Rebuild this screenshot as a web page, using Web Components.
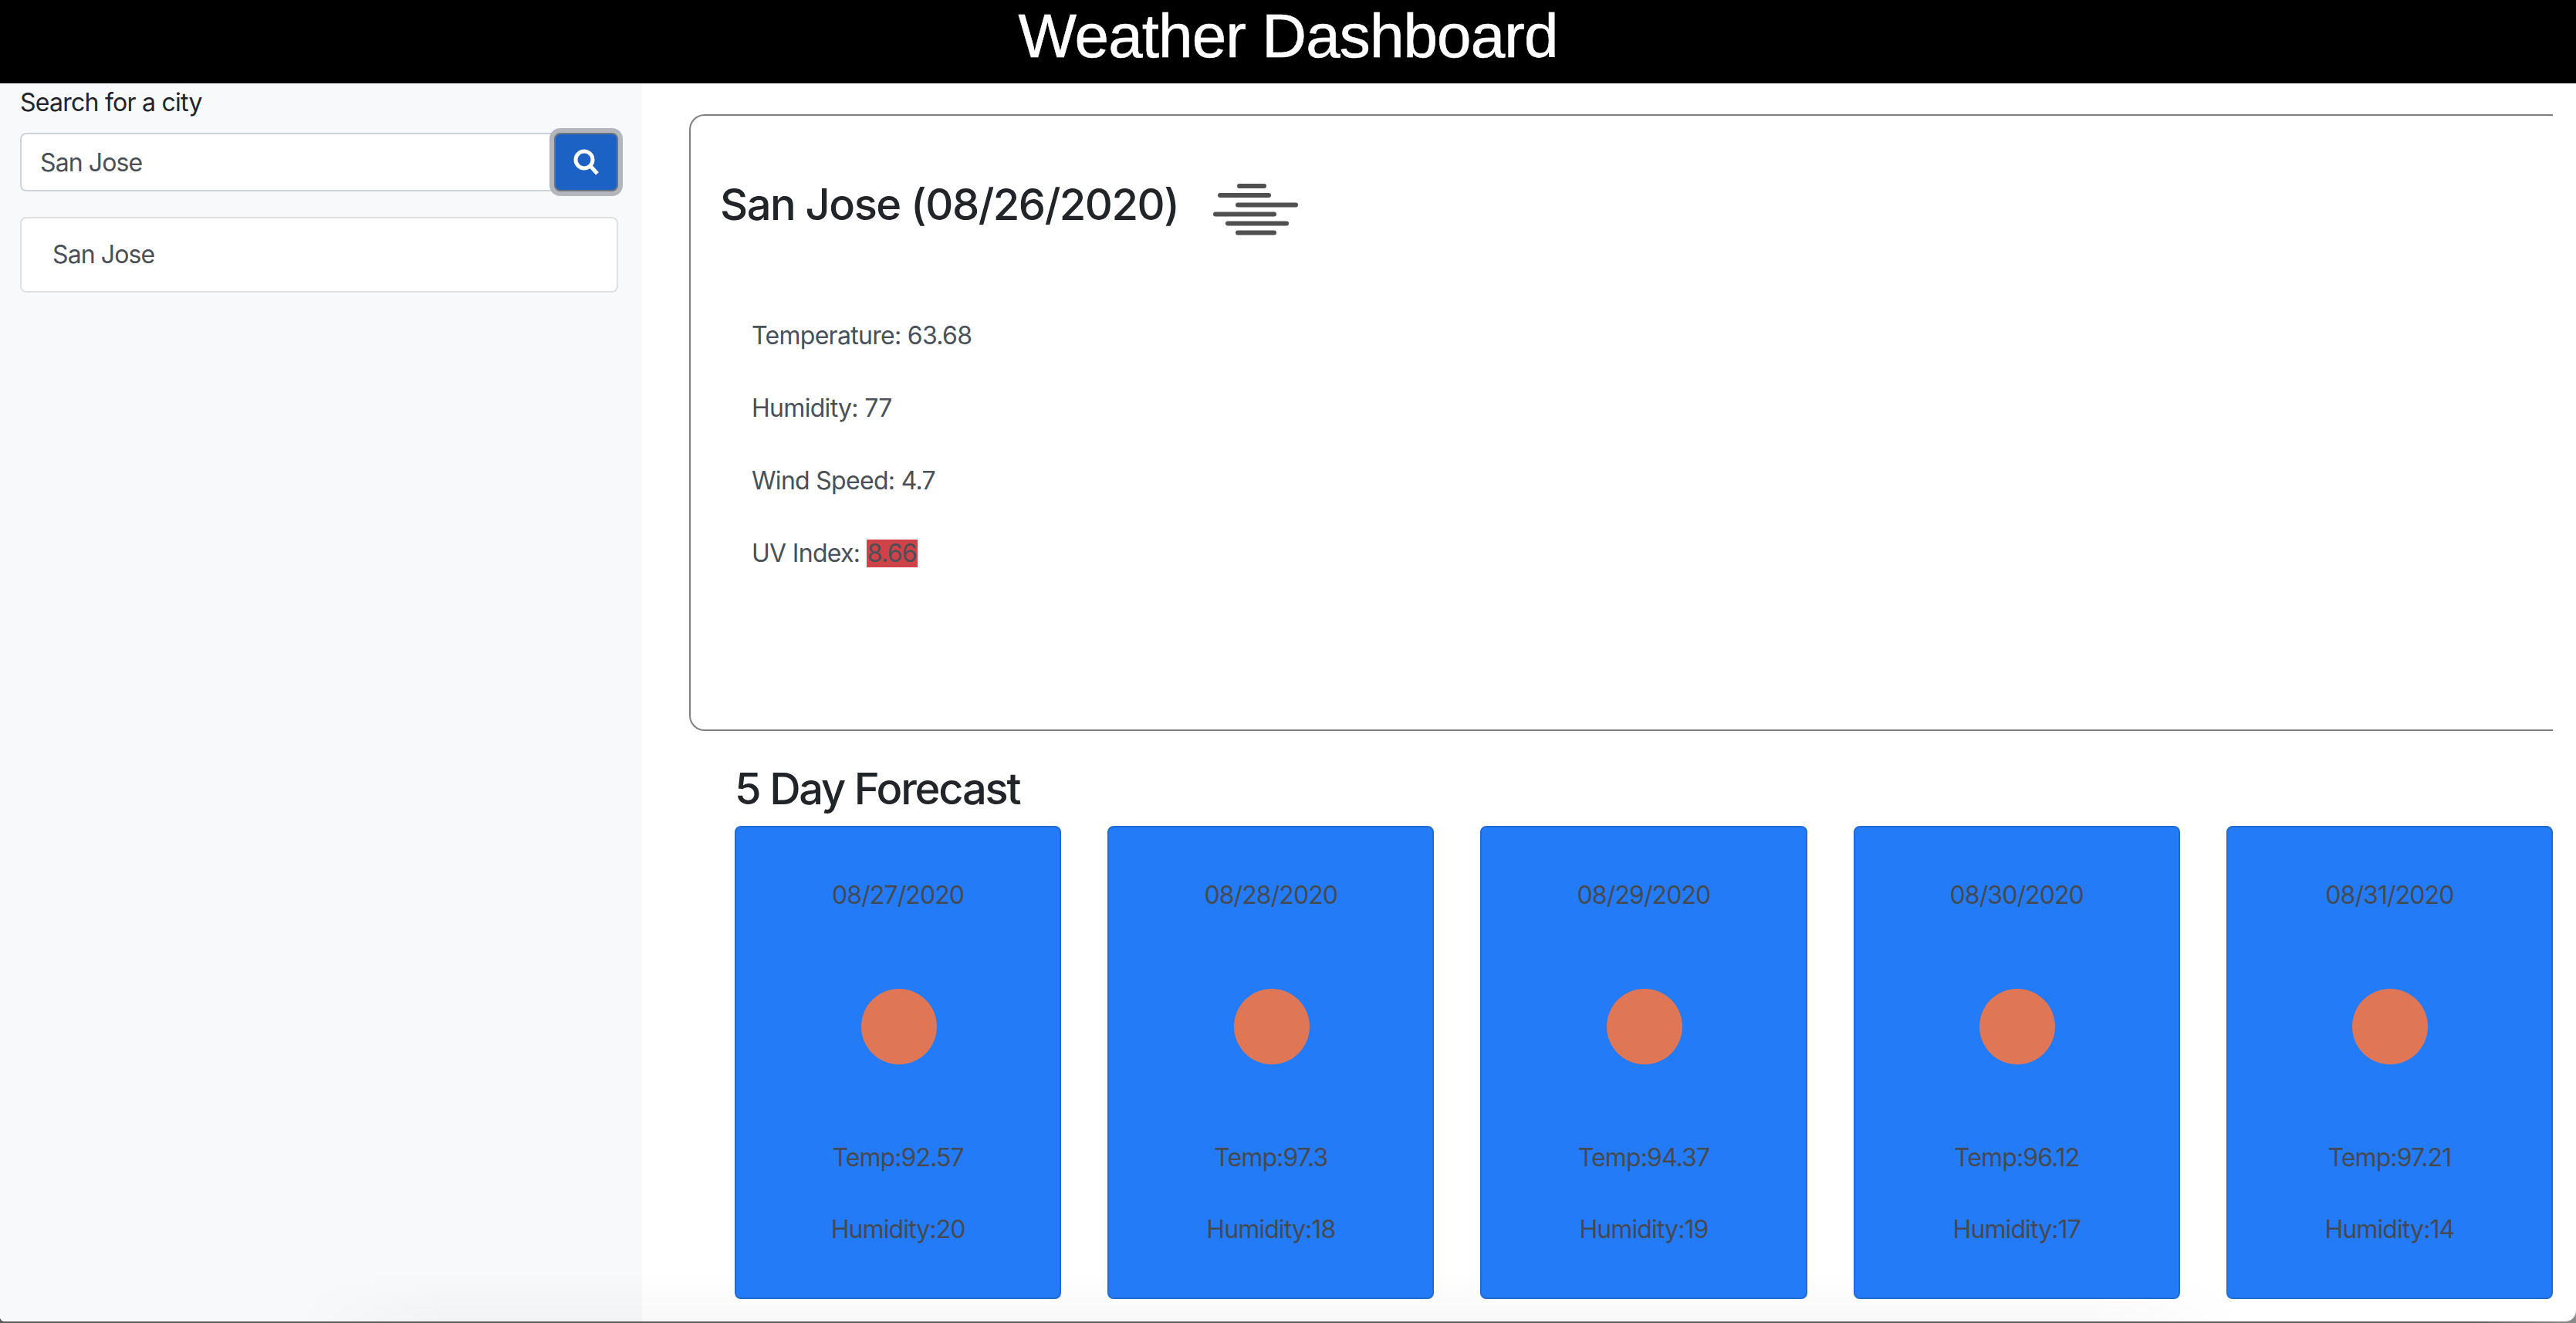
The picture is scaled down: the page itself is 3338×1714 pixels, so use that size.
<!DOCTYPE html>
<html lang="en">
<head>
<meta charset="utf-8">
<title>Weather Dashboard</title>
<style>
  html { height: 1714px; overflow: hidden; background: linear-gradient(to right, #5c5c5c 96%, #8c8c8c); }
  body { margin: 0; height: 1714px; overflow: hidden; position: relative; font-family: Inter, "Liberation Sans", sans-serif; }
</style>
</head>
<body>
<weather-app>
  <app-header>Weather Dashboard</app-header>
  <search-sidebar slot="side">
    <history-item>San Jose</history-item>
  </search-sidebar>
  <current-weather slot="main" city="San Jose (08/26/2020)" temp="63.68" humidity="77" wind="4.7" uv="8.66"></current-weather>
  <forecast-list slot="main">
    <forecast-card date="08/27/2020" temp="92.57" humidity="20"></forecast-card>
    <forecast-card date="08/28/2020" temp="97.3" humidity="18"></forecast-card>
    <forecast-card date="08/29/2020" temp="94.37" humidity="19"></forecast-card>
    <forecast-card date="08/30/2020" temp="96.12" humidity="17"></forecast-card>
    <forecast-card date="08/31/2020" temp="97.21" humidity="14"></forecast-card>
  </forecast-list>
</weather-app>

<script>
// small helper so every element gets an open shadow root from a template string
function define(name, html, extra) {
  const template = document.createElement("template");
  template.innerHTML = html.trim();
  class El extends HTMLElement {
    constructor() {
      super();
      this.attachShadow({mode: "open"}).appendChild(template.content.cloneNode(true));
    }
    connectedCallback() {
      if (extra) extra(this.shadowRoot, this);
    }
  }
  customElements.define(name, El);
}

define("weather-app", `
<style>
  :host { display: flex; flex-direction: column; height: 1712px; background: #fff; overflow: hidden; border-radius: 0 0 14px 6px; position: relative; }
  .row { flex: 1; display: grid; grid-template-columns: 832px 1fr; min-height: 0; }
  .main { padding: 40px 30px 0 61px; min-width: 0; }
  .shade { position: absolute; left: 383px; width: 2522px; top: 1650px; height: 62px; pointer-events: none;
    background: linear-gradient(to bottom, rgba(0,0,0,0), rgba(0,0,0,.028));
    -webkit-mask-image: linear-gradient(to right, transparent, #000 8%, #000 92%, transparent); }
</style>
<slot></slot>
<div class="row">
  <slot name="side"></slot>
  <div class="main"><slot name="main"></slot></div>
</div>
<div class="shade"></div>
`);

define("app-header", `
<style>
  :host { display: block; height: 108px; background: #000; color: #fff; text-align: center;
    font: 400 80px/93px "Liberation Sans", Arial, sans-serif; letter-spacing: -0.9px; -webkit-text-stroke: 0.6px #fff; }
</style>
<slot></slot>
`);

define("search-sidebar", `
<style>
  :host { display: block; background: #f8f9fa; padding: 1px 31px 0 26px; font: 400 32px/48px Inter, sans-serif; color: #212529; }
  .label { letter-spacing: -0.75px; }
  .group { display: flex; margin-top: 15px; height: 76px; }
  .input { flex: 1; box-sizing: border-box; border: 2px solid #ced4da; border-right: 0; border-radius: 8px 0 0 8px; background: #fff;
    padding: 0 24px; line-height: 74px; color: #495057; letter-spacing: -0.9px; }
  button { width: 83px; box-sizing: border-box; padding: 0; border: 2px solid #6c757d; border-radius: 8px; background: #1b62c4;
    box-shadow: 0 0 0 6px #b3b6ba; position: relative; display: flex; align-items: center; justify-content: center; }
  .list { margin-top: 33px; }
</style>
<div class="label">Search for a city</div>
<div class="group">
  <div class="input">San Jose</div>
  <button aria-label="Search">
    <svg width="36" height="36" viewBox="0 0 36 36" fill="none" stroke="#fff" stroke-width="5">
      <circle cx="15" cy="15" r="11"/>
      <path d="M23 23 L32 33"/>
    </svg>
  </button>
</div>
<div class="list"><slot></slot></div>
`);

define("history-item", `
<style>
  :host { display: block; box-sizing: border-box; height: 98px; background: #fff; border: 2px solid #dfe0e1; border-radius: 8px;
    padding: 0 40px; line-height: 94px; color: #495057; letter-spacing: -0.9px; }
</style>
<slot></slot>
`);

define("fog-icon", `
<style>
  :host { display: block; width: 140px; height: 90px; }
  svg { display: block; filter: blur(0.6px); }
</style>
<svg width="140" height="90" viewBox="0 0 140 90" fill="none" stroke="#505050" stroke-width="6" stroke-linecap="round">
  <path d="M47 16H79"/>
  <path d="M22 28H85"/>
  <path d="M45 40.5H120"/>
  <path d="M16 52.5H92"/>
  <path d="M32 64.5H108"/>
  <path d="M45 76.5H92"/>
</svg>
`);

define("current-weather", `
<style>
  :host { display: block; box-sizing: border-box; height: 799px; border: 2px solid #808080; border-right: 0; border-radius: 20px 0 0 20px;
    padding: 75px 0 0 38px; font: 400 32px/48px Inter, sans-serif; color: #495057; }
  .head { display: flex; align-items: flex-start; height: 90px; }
  h2 { margin: 0; font: 500 56px/80px Inter, sans-serif; color: #212529; letter-spacing: -1.5px; }
  fog-icon { margin-left: 32px; }
  .lines { margin-top: 96px; padding-left: 41px; letter-spacing: -0.7px; }
  p { margin: 0 0 46px; }
  .uv { display: inline-block; background: #cf4348; line-height: 36px; padding: 0 1px; }
</style>
<div class="head"><h2 id="city"></h2><fog-icon></fog-icon></div>
<div class="lines">
  <p>Temperature: <span id="temp"></span></p>
  <p>Humidity: <span id="humidity"></span></p>
  <p>Wind Speed: <span id="wind"></span></p>
  <p>UV Index: <span class="uv" id="uv"></span></p>
</div>
`, (root, el) => {
  for (const k of ["city", "temp", "humidity", "wind", "uv"]) root.getElementById(k).textContent = el.getAttribute(k);
});

define("forecast-list", `
<style>
  :host { display: block; margin: 41px 0 0 59px; }
  h3 { margin: 0 0 14px; font: 500 56px/68px Inter, sans-serif; color: #212529; letter-spacing: -2.2px; }
  .cards { display: grid; grid-template-columns: repeat(5, 1fr); gap: 60px; }
</style>
<h3>5 Day Forecast</h3>
<div class="cards"><slot></slot></div>
`);

define("forecast-card", `
<style>
  :host { display: block; box-sizing: border-box; height: 613px; position: relative; z-index: 1; background: #237bf8; border: 2px solid #1f6bd1; border-radius: 8px;
    padding-top: 64px; text-align: center; font: 400 32px/48px Inter, sans-serif; color: #464a50; letter-spacing: -0.9px; }
  .sun { width: 98px; height: 98px; border-radius: 50%; background: #df7656; margin: 97px auto; position: relative; left: 1px; }
  .hum { margin-top: 45px; }
</style>
<div id="date"></div>
<div class="sun"></div>
<div>Temp:<span id="temp"></span></div>
<div class="hum">Humidity:<span id="humidity"></span></div>
`, (root, el) => {
  for (const k of ["date", "temp", "humidity"]) root.getElementById(k).textContent = el.getAttribute(k);
});
</script>
</body>
</html>
